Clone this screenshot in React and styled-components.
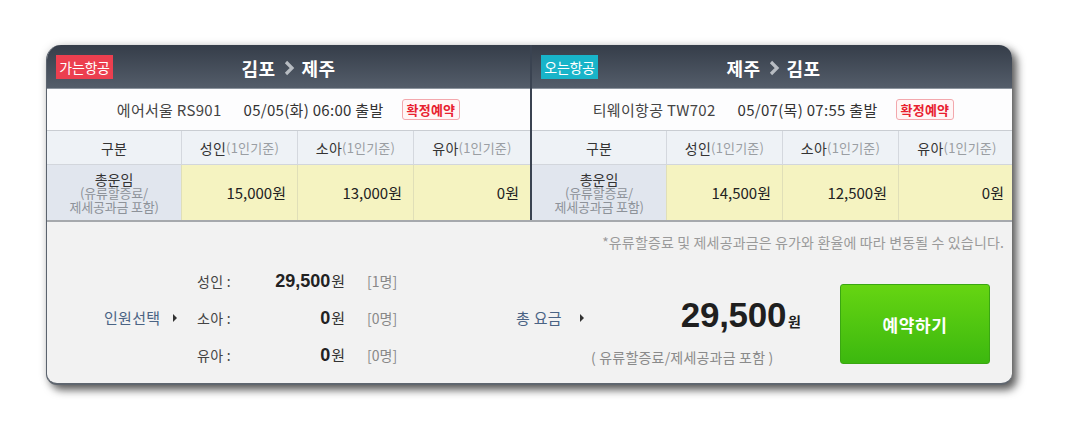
import React from "react";
import styled, { createGlobalStyle } from "styled-components";

const GlobalStyle = createGlobalStyle`
  html, body { margin: 0; padding: 0; background: #ffffff; }
  body { font-family: "Noto Sans CJK KR", "Noto Sans", sans-serif; color: #333; }
  * { box-sizing: border-box; }
`;

const Page = styled.div`
  padding: 45px 0 0 46px;
  width: 1069px;
  height: 443px;
`;

const Card = styled.div`
  width: 966px;
  height: 340px;
  border-radius: 15px 13px 11px 11px;
  overflow: hidden;
  background: #f2f2f2;
  border-left: 1px solid #5b636e;
  border-bottom: 2px solid #5f666f;
  box-shadow: 5px 5px 9px rgba(0, 0, 0, 0.62), 0 0 10px rgba(0, 0, 0, 0.12);
  display: flex;
  flex-direction: column;
`;

const Flights = styled.div`
  display: grid;
  grid-template-columns: 483px 2px 483px;
  border-bottom: 2px solid #a6a9ad;
`;

const Divider = styled.div`
  background: #3a4351;
`;

const Leg = styled.section`
  display: flex;
  flex-direction: column;
  width: 483px;
`;

const LegHeader = styled.header`
  height: 44px;
  display: grid;
  grid-template-columns: 1fr auto 1fr;
  align-items: start;
  background: linear-gradient(#353d49, #545d6a);
  border-bottom: 1px solid #8c949e;
`;

const Badge = styled.span`
  justify-self: start;
  margin: 10px 0 0 9px;
  width: 57px;
  height: 24px;
  display: flex;
  align-items: center;
  justify-content: center;
  font-size: 14px;
  letter-spacing: -0.3px;
  color: #fff;
  background: ${(p) => p.$color};
`;

const Route = styled.h2`
  margin: 0;
  padding-top: 12px;
  display: flex;
  align-items: center;
  gap: 7px;
  font-size: 18px;
  line-height: 22px;
  letter-spacing: 0.4px;
  font-weight: 700;
  color: #fff;
`;

const Chevron = () => (
  <svg width="12" height="16" viewBox="0 0 12 16">
    <polyline points="3,2 9,8 3,14" fill="none" stroke="#b7bcc2" strokeWidth="3.2" />
  </svg>
);

const InfoRow = styled.div`
  height: 42px;
  display: flex;
  align-items: center;
  justify-content: center;
  background: #fdfdfe;
  border-bottom: 1px solid #c9cdd2;
  font-size: 15px;
  letter-spacing: 0.3px;
  color: #444;
`;

const Flight = styled.span`
  margin-right: 22px;
`;

const Departure = styled.span`
  color: #333;
  margin-right: 18px;
`;

const Tag = styled.span`
  height: 21px;
  padding: 0 4px;
  display: flex;
  align-items: center;
  font-size: 13px;
  font-weight: 700;
  letter-spacing: 0.2px;
  color: #e8202f;
  background: #fff6f6;
  border: 1px solid #f3a8ad;
  border-radius: 3px;
`;

const FareTable = styled.div`
  display: grid;
  grid-template-columns: 134px 116px 116px 117px;
`;

const HeadCell = styled.div`
  height: 34px;
  display: flex;
  align-items: center;
  justify-content: center;
  background: #eef2f6;
  border-bottom: 1px solid #d2d6dc;
  border-left: ${(p) => (p.$first ? "none" : "1px solid #d4d8de")};
  font-size: 14px;
  letter-spacing: 0.2px;
  color: #333;
`;

const Sub = styled.span`
  font-size: 13px;
  color: #9a9ea3;
`;

const LabelCell = styled.div`
  height: 55px;
  display: flex;
  flex-direction: column;
  align-items: center;
  justify-content: center;
  background: #e1e6ee;
  font-size: 14px;
  line-height: 14px;
  color: #333;
  text-align: center;
`;

const LabelNote = styled.span`
  font-size: 13px;
  line-height: 14px;
  color: #8d9299;
  letter-spacing: -0.2px;
`;

const PriceCell = styled.div`
  height: 55px;
  display: flex;
  align-items: center;
  justify-content: flex-end;
  padding-right: 11px;
  background: #f5f3c1;
  border-left: 1px solid #e0dfb8;
  font-size: 15px;
  color: #222;
`;

const Bottom = styled.div`
  flex: 1;
  display: flex;
  flex-direction: column;
`;

const Note = styled.p`
  margin: 10px 8px 0 0;
  text-align: right;
  font-size: 14px;
  letter-spacing: 0.15px;
  line-height: 20px;
  color: #9a9a9a;
`;

const MainRow = styled.div`
  margin-top: 10px;
  display: flex;
  align-items: flex-start;
`;

const Trigger = styled.div`
  width: ${(p) => p.$w}px;
  padding-left: ${(p) => p.$pad}px;
  height: 111px;
  display: flex;
  align-items: center;
  font-size: 15px;
  letter-spacing: 0.3px;
  color: #4a6384;
`;

const Caret = styled.span`
  margin-left: ${(p) => p.$gap}px;
  width: 0;
  height: 0;
  border-top: 4px solid transparent;
  border-bottom: 4px solid transparent;
  border-left: 4px solid #333;
`;

const Breakdown = styled.div`
  width: 319px;
  display: grid;
  grid-template-columns: 60px 88px auto;
  grid-auto-rows: 37px;
  align-items: center;
`;

const PaxLabel = styled.span`
  font-size: 14px;
  letter-spacing: 0.3px;
  color: #444;
`;

const PaxAmount = styled.span`
  text-align: right;
  font-size: 15px;
  color: #333;
`;

const AmountNum = styled.b`
  font-family: "Liberation Sans", Arial, sans-serif;
  font-size: 18px;
  color: #222;
  margin-right: 1px;
`;

const PaxCount = styled.span`
  padding-left: 22px;
  font-size: 14px;
  color: #888;
`;

const TotalBlock = styled.div`
  width: 210px;
  padding-top: 33px;
  display: flex;
  flex-direction: column;
`;

const TotalAmount = styled.div`
  text-align: right;
  line-height: 40px;
  color: #1f1f1f;
`;

const TotalNum = styled.b`
  font-family: "Liberation Sans", Arial, sans-serif;
  font-size: 35px;
  letter-spacing: -0.3px;
`;

const TotalWon = styled.b`
  font-size: 14px;
  margin-left: 2px;
`;

const TotalCaption = styled.span`
  margin-top: 6px;
  font-size: 14px;
  letter-spacing: 0.2px;
  line-height: 20px;
  color: #8a8a8a;
`;

const ReserveButton = styled.button`
  margin: 22px 0 0 39px;
  width: 150px;
  height: 80px;
  border: 1px solid #3aa712;
  border-radius: 3px;
  background: linear-gradient(#66d512, #3cb80f);
  color: #fff;
  font-family: "Noto Sans CJK KR", sans-serif;
  font-size: 17px;
  letter-spacing: 0.6px;
  font-weight: 700;
  cursor: pointer;
`;

const legs = [
  {
    badge: "가는항공",
    color: "#ec3f4f",
    from: "김포",
    to: "제주",
    flight: "에어서울 RS901",
    dep: "05/05(화) 06:00 출발",
    prices: ["15,000원", "13,000원", "0원"],
  },
  {
    badge: "오는항공",
    color: "#18b4c9",
    from: "제주",
    to: "김포",
    flight: "티웨이항공 TW702",
    dep: "05/07(목) 07:55 출발",
    prices: ["14,500원", "12,500원", "0원"],
  },
];

const heads = ["성인", "소아", "유아"];

function LegPanel({ leg }) {
  return (
    <Leg>
      <LegHeader>
        <Badge $color={leg.color}>{leg.badge}</Badge>
        <Route>
          {leg.from}
          <Chevron />
          {leg.to}
        </Route>
        <span />
      </LegHeader>
      <InfoRow>
        <Flight>{leg.flight}</Flight>
        <Departure>{leg.dep}</Departure>
        <Tag>확정예약</Tag>
      </InfoRow>
      <FareTable>
        <HeadCell $first>구분</HeadCell>
        {heads.map((h) => (
          <HeadCell key={h}>
            {h}
            <Sub>(1인기준)</Sub>
          </HeadCell>
        ))}
        <LabelCell>
          총운임
          <LabelNote>(유류할증료/</LabelNote>
          <LabelNote>제세공과금 포함)</LabelNote>
        </LabelCell>
        {leg.prices.map((p, i) => (
          <PriceCell key={i}>{p}</PriceCell>
        ))}
      </FareTable>
    </Leg>
  );
}

const pax = [
  { label: "성인 :", amount: "29,500", count: "[1명]" },
  { label: "소아 :", amount: "0", count: "[0명]" },
  { label: "유아 :", amount: "0", count: "[0명]" },
];

export default function App() {
  return (
    <>
      <GlobalStyle />
      <Page>
        <Card>
          <Flights>
            <LegPanel leg={legs[0]} />
            <Divider />
            <LegPanel leg={legs[1]} />
          </Flights>
          <Bottom>
            <Note>*유류할증료 및 제세공과금은 유가와 환율에 따라 변동될 수 있습니다.</Note>
            <MainRow>
              <Trigger $w={150} $pad={57}>
                인원선택
                <Caret $gap={13} />
              </Trigger>
              <Breakdown>
                {pax.map((p) => (
                  <React.Fragment key={p.label}>
                    <PaxLabel>{p.label}</PaxLabel>
                    <PaxAmount>
                      <AmountNum>{p.amount}</AmountNum>원
                    </PaxAmount>
                    <PaxCount>{p.count}</PaxCount>
                  </React.Fragment>
                ))}
              </Breakdown>
              <Trigger $w={75} $pad={0}>
                총 요금
                <Caret $gap={18} />
              </Trigger>
              <TotalBlock>
                <TotalAmount>
                  <TotalNum>29,500</TotalNum>
                  <TotalWon>원</TotalWon>
                </TotalAmount>
                <TotalCaption>( 유류할증료/제세공과금 포함 )</TotalCaption>
              </TotalBlock>
              <ReserveButton>예약하기</ReserveButton>
            </MainRow>
          </Bottom>
        </Card>
      </Page>
    </>
  );
}
